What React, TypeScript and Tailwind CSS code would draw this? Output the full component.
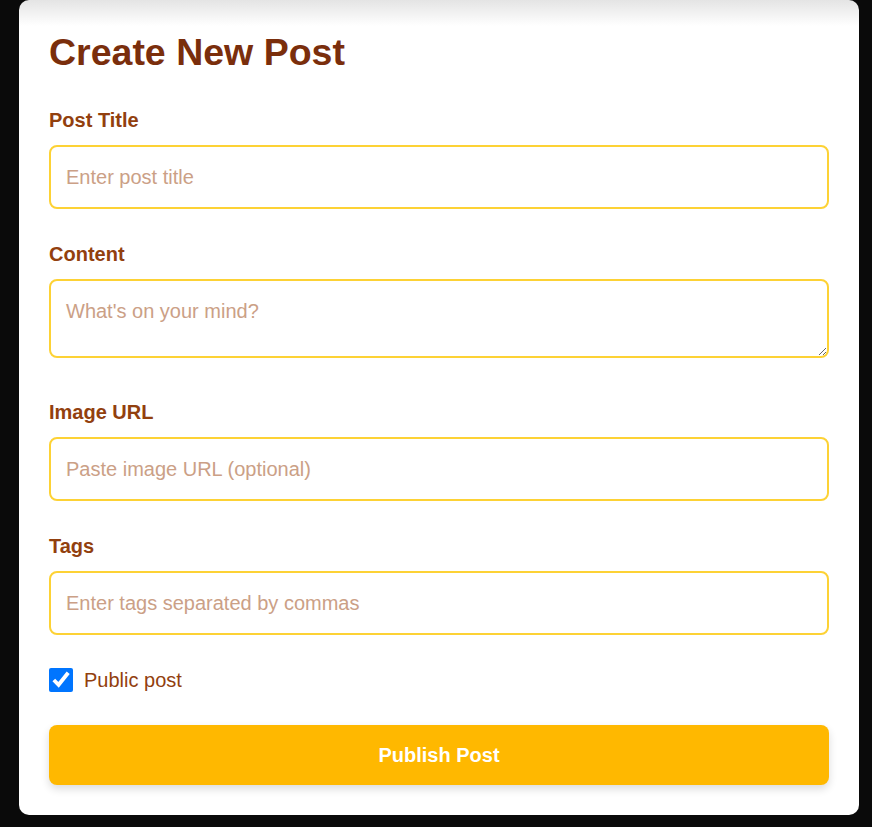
import React from 'react';

const Field = ({ label, children }: { label: string; children: React.ReactNode }) => (
  <div className="mb-[33px]">
    <label className="block text-[20px] leading-6 font-bold text-[#92400e] mb-[13px]">{label}</label>
    {children}
  </div>
);

const inputCls =
  'block w-full h-[64px] px-[15px] border-2 border-[#fdd235] rounded-[8px] bg-white text-[20px] text-[#7c2d12] outline-none placeholder:text-[#cba086]';

export default function App() {
  return (
    <div className="min-h-[827px] bg-[#0a0a0a] pl-[19px]" style={{ fontFamily: '"Liberation Sans", Arial, sans-serif' }}>
      <div className="w-[840px] rounded-[10px] bg-white bg-[linear-gradient(to_bottom,#e4e4e4,#ffffff_26px)] p-[30px]">
        <h1 className="text-[37.5px] leading-[45px] font-bold text-[#7a2e0c] mb-[33px]">Create New Post</h1>

        <Field label="Post Title">
          <input className={inputCls} placeholder="Enter post title" />
        </Field>

        <Field label="Content">
          <textarea
            className="block w-full h-[79px] px-[15px] pt-[16px] pb-[14px] leading-[28px] border-2 border-[#fdd235] rounded-[8px] bg-white text-[20px] text-[#7c2d12] outline-none placeholder:text-[#cba086]"
            placeholder="What's on your mind?"
          />
          <div className="h-[9px]" />
        </Field>

        <Field label="Image URL">
          <input className={inputCls} placeholder="Paste image URL (optional)" />
        </Field>

        <Field label="Tags">
          <input className={inputCls} placeholder="Enter tags separated by commas" />
        </Field>

        <label className="flex items-center gap-[11px] h-6 mb-[33px]">
          <input type="checkbox" defaultChecked className="w-6 h-6 m-0" />
          <span className="text-[20px] text-[#92400e]">Public post</span>
        </label>

        <button className="block w-full h-[60px] rounded-[8px] bg-[#ffb800] text-white text-[20px] font-bold shadow-[0_4px_8px_rgba(0,0,0,0.14)]">
          Publish Post
        </button>
      </div>
    </div>
  );
}
